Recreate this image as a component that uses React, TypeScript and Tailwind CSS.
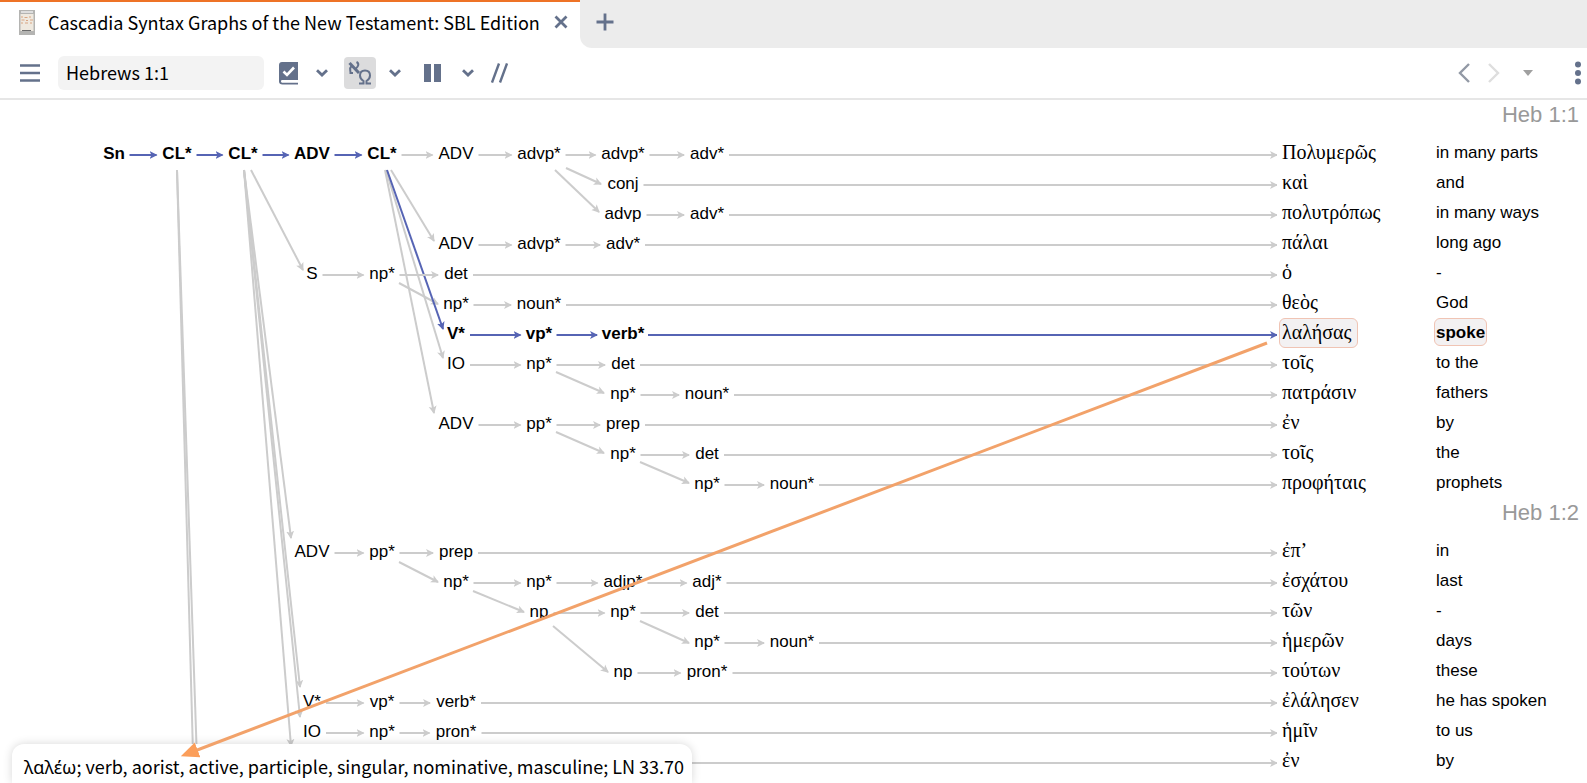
type Label = [col: number, text: string, strong?: boolean];

interface Row {
  nodes: Label[];
  greek: string;
  gloss: string;
  current?: boolean;
}

interface Verse {
  ref: string;
  rows: Row[];
}

const VERSES: Verse[] = [
  {
    ref: "Heb 1:1",
    rows: [
      {
        nodes: [
          [0, "Sn", true],
          [1, "CL*", true],
          [2, "CL*", true],
          [3, "ADV", true],
          [4, "CL*", true],
          [5, "ADV"],
          [6, "advp*"],
          [7, "advp*"],
          [8, "adv*"],
        ],
        greek: "Πολυμερῶς",
        gloss: "in many parts",
      },
      { nodes: [[7, "conj"]], greek: "καὶ", gloss: "and" },
      { nodes: [[7, "advp"], [8, "adv*"]], greek: "πολυτρόπως", gloss: "in many ways" },
      { nodes: [[5, "ADV"], [6, "advp*"], [7, "adv*"]], greek: "πάλαι", gloss: "long ago" },
      { nodes: [[3, "S"], [4, "np*"], [5, "det"]], greek: "ὁ", gloss: "-" },
      { nodes: [[5, "np*"], [6, "noun*"]], greek: "θεὸς", gloss: "God" },
      {
        nodes: [[5, "V*", true], [6, "vp*", true], [7, "verb*", true]],
        greek: "λαλήσας",
        gloss: "spoke",
        current: true,
      },
      { nodes: [[5, "IO"], [6, "np*"], [7, "det"]], greek: "τοῖς", gloss: "to the" },
      { nodes: [[7, "np*"], [8, "noun*"]], greek: "πατράσιν", gloss: "fathers" },
      { nodes: [[5, "ADV"], [6, "pp*"], [7, "prep"]], greek: "ἐν", gloss: "by" },
      { nodes: [[7, "np*"], [8, "det"]], greek: "τοῖς", gloss: "the" },
      { nodes: [[8, "np*"], [9, "noun*"]], greek: "προφήταις", gloss: "prophets" },
    ],
  },
  {
    ref: "Heb 1:2",
    rows: [
      { nodes: [[3, "ADV"], [4, "pp*"], [5, "prep"]], greek: "ἐπ’", gloss: "in" },
      { nodes: [[5, "np*"], [6, "np*"], [7, "adjp*"], [8, "adj*"]], greek: "ἐσχάτου", gloss: "last" },
      { nodes: [[6, "np"], [7, "np*"], [8, "det"]], greek: "τῶν", gloss: "-" },
      { nodes: [[8, "np*"], [9, "noun*"]], greek: "ἡμερῶν", gloss: "days" },
      { nodes: [[7, "np"], [8, "pron*"]], greek: "τούτων", gloss: "these" },
      { nodes: [[3, "V*"], [4, "vp*"], [5, "verb*"]], greek: "ἐλάλησεν", gloss: "he has spoken" },
      { nodes: [[3, "IO"], [4, "np*"], [5, "pron*"]], greek: "ἡμῖν", gloss: "to us" },
      { nodes: [], greek: "ἐν", gloss: "by" },
    ],
  },
];

/** Centre of each level of the tree, left to right. */
const COLS = [114, 177, 243, 312, 382, 456, 539, 623, 707, 792];

const LABEL_WIDTH: Record<string, number> = {
  Sn: 21,
  "CL*": 29,
  ADV: 35,
  "advp*": 43,
  advp: 37,
  "adv*": 34,
  conj: 31,
  S: 11,
  det: 24,
  "np*": 25,
  np: 19,
  "noun*": 44,
  "V*": 18,
  "vp*": 25,
  "verb*": 40,
  IO: 18,
  "pp*": 25,
  prep: 34,
  "adjp*": 39,
  "adj*": 29,
  "pron*": 41,
};

const HEADING_HEIGHT = 38;
const ROW_HEIGHT = 30;

/** Arrows that drop from a parent to a child on a lower row. */
const BRANCHES: [x1: number, y1: number, x2: number, y2: number][] = [
  [177, 70, 194, 690],
  [177, 70, 198, 690],
  [244, 70, 291, 646],
  [244, 70, 300, 617],
  [244, 70, 300, 587],
  [244, 70, 291, 438],
  [251, 70, 303, 170],
  [385, 70, 434, 313],
  [386, 70, 443, 258],
  [391, 70, 434, 141],
  [399, 183, 438, 204],
  [566, 68, 601, 84],
  [555, 70, 599, 112],
  [556, 272, 604, 293],
  [556, 332, 604, 353],
  [640, 362, 689, 383],
  [399, 462, 438, 482],
  [473, 491, 524, 512],
  [640, 521, 689, 543],
  [553, 526, 608, 572],
];

const ICON_BUTTON = "flex shrink-0 items-center justify-center text-[#64718b]";

function verseTop(index: number) {
  return VERSES.slice(0, index).reduce((top, verse) => top + HEADING_HEIGHT + verse.rows.length * ROW_HEIGHT, 0);
}

function Arrow({ x1, y1, x2, y2, strong }: { x1: number; y1: number; x2: number | string; y2: number; strong?: boolean }) {
  return (
    <line
      x1={x1}
      y1={y1}
      x2={x2}
      y2={y2}
      stroke={strong ? "#5664b4" : "#cccccc"}
      strokeWidth="2"
      markerEnd={strong ? "url(#head-strong)" : "url(#head)"}
    />
  );
}

function TreeRow({ row, y }: { row: Row; y: number }) {
  const last = row.nodes[row.nodes.length - 1];
  const leafStart = last ? COLS[last[0]] + LABEL_WIDTH[last[1]] / 2 + 5 : 560;

  return (
    <g>
      {row.nodes.map(([col, text, strong], i) => {
        const next = row.nodes[i + 1];
        return (
          <g key={col}>
            <text x={COLS[col]} y={y + 5} textAnchor="middle" className={strong ? "fill-black font-bold" : "fill-black"}>
              {text}
            </text>
            {next && (
              <Arrow
                x1={COLS[col] + LABEL_WIDTH[text] / 2 + 5}
                y1={y + 1}
                x2={COLS[next[0]] - LABEL_WIDTH[next[1]] / 2 - 6}
                y2={y + 1}
                strong={strong && next[2]}
              />
            )}
          </g>
        );
      })}
      <Arrow x1={leafStart} y1={y + 1} x2="100%" y2={y + 1} strong={row.current} />
    </g>
  );
}

function SyntaxTree() {
  return (
    <svg role="img" aria-label="Syntax tree" className="h-[684px] min-w-0 flex-1 text-[17px]">
      <defs>
        <marker id="head" markerUnits="userSpaceOnUse" markerWidth="9" markerHeight="9" refX="7" refY="4.5" orient="auto">
          <path d="M0 0.5L8 4.5L0 8.5L2 4.5Z" fill="#cccccc" />
        </marker>
        <marker id="head-strong" markerUnits="userSpaceOnUse" markerWidth="9" markerHeight="9" refX="7" refY="4.5" orient="auto">
          <path d="M0 0.5L8 4.5L0 8.5L2 4.5Z" fill="#5664b4" />
        </marker>
      </defs>
      {BRANCHES.map(([x1, y1, x2, y2]) => (
        <Arrow key={`${x1}-${x2}-${y2}`} x1={x1} y1={y1} x2={x2} y2={y2} />
      ))}
      <Arrow x1={387} y1={70} x2={443} y2={229} strong />
      {VERSES.map((verse, v) =>
        verse.rows.map((row, i) => (
          <TreeRow key={`${v}-${i}`} row={row} y={verseTop(v) + HEADING_HEIGHT + i * ROW_HEIGHT + 16} />
        )),
      )}
    </svg>
  );
}

function WordTable() {
  return (
    <table className="w-[310px] shrink-0 table-fixed border-collapse self-start text-left text-[17px] leading-[30px]">
      <colgroup>
        <col className="w-[159px]" />
        <col />
      </colgroup>
      {VERSES.map((verse) => (
        <tbody key={verse.ref}>
          <tr className="h-[38px]">
            <th colSpan={2} className="p-0 pr-2 text-right align-top text-[22px] leading-[30px] font-normal text-[#999999]">
              {verse.ref}
            </th>
          </tr>
          {verse.rows.map((row, i) => (
            <tr key={i} className="h-[30px]">
              <td lang="grc" className="p-0 pl-[5px] align-top font-['Liberation_Serif',serif] text-[20px]">
                {row.current ? (
                  <span className="-ml-[3px] block h-[30px] w-fit rounded-md border border-[#f0c4b4] bg-[#f3f1f2] pr-1.5 pl-[2px] leading-[26px]">
                    {row.greek}
                  </span>
                ) : (
                  <span className="block h-[30px] leading-[28px]">{row.greek}</span>
                )}
              </td>
              <td className="p-0 align-top">
                {row.current ? (
                  <span className="-ml-[2px] block h-[28px] w-fit rounded-md border border-[#f0c4b4] bg-[#f3f1f2] px-px leading-[28px] font-bold">
                    {row.gloss}
                  </span>
                ) : (
                  <span className="block h-[30px]">{row.gloss}</span>
                )}
              </td>
            </tr>
          ))}
        </tbody>
      ))}
    </table>
  );
}

function ChevronDown({ label }: { label: string }) {
  return (
    <button type="button" aria-label={label} className={`${ICON_BUTTON} h-8 w-3`}>
      <svg width="12" height="8" viewBox="0 0 12 8" fill="none" stroke="currentColor" strokeWidth="2.8">
        <path d="M1 1.2L6 6L11 1.2" />
      </svg>
    </button>
  );
}

function TabBar() {
  return (
    <div className="flex h-12 bg-white">
      <div className="flex h-full items-center border-t-2 border-[#ee7326] pr-3 pb-1.5 pl-[19px]">
        <svg width="16" height="25" viewBox="0 0 16 25" className="shrink-0">
          <rect width="16" height="25" fill="#b4b4b2" />
          <rect x="1.5" y="4" width="13" height="17" fill="#efe9df" />
          <path d="M2 7h2M5.5 7.5h3M10 7h2M2.500 10h3M7 10.500h2M11 10h3M2 13h2M6 13h3M11 13h2" stroke="#d8a583" strokeWidth="1" />
          <path d="M2 2h12" stroke="#dedede" strokeWidth="2" />
          <path d="M3 20.500h9" stroke="#6b6b6b" strokeWidth="1" />
        </svg>
        <span className="ml-[13px] text-[18px] leading-6 whitespace-nowrap">
          Cascadia Syntax Graphs of the New Testament: SBL Edition
        </span>
        <button type="button" aria-label="Close tab" className={`${ICON_BUTTON} ml-[14px]`}>
          <svg width="14" height="14" viewBox="0 0 14 14" stroke="currentColor" strokeWidth="2.800">
            <path d="M1.500 1.500L12.500 12.500M12.500 1.500L1.500 12.500" />
          </svg>
        </button>
      </div>
      <div className="flex h-full flex-1 items-center rounded-bl-xl bg-[#ececec] pb-1 pl-4">
        <button type="button" aria-label="New tab" className={ICON_BUTTON}>
          <svg width="18" height="18" viewBox="0 0 18 18" stroke="currentColor" strokeWidth="2.800">
            <path d="M9 0.500V17.500M0.500 9H17.500" />
          </svg>
        </button>
      </div>
    </div>
  );
}

function Toolbar() {
  return (
    <div className="flex h-[52px] items-center border-b-2 border-[#e6e6e6] bg-white pr-[5px] pl-5">
      <button type="button" aria-label="Panel menu" className={ICON_BUTTON}>
        <svg width="20" height="18" viewBox="0 0 20 18" stroke="currentColor" strokeWidth="2.400">
          <path d="M0 1.500H20M0 9H20M0 16.500H20" />
        </svg>
      </button>
      <input
        type="text"
        aria-label="Reference"
        defaultValue="Hebrews 1:1"
        className="ml-[18px] h-[34px] w-[206px] rounded-md bg-[#f3f3f3] px-2 pb-[3px] text-[18px] outline-none"
      />
      <button type="button" aria-label="Resource" className={`${ICON_BUTTON} ml-[15px]`}>
        <svg width="20" height="23" viewBox="0 0 20 23">
          <path
            fill="currentColor"
            fillRule="evenodd"
            d="M3 0H19V18H3.500C2.300 18 2 18.600 2 19.300C2 20.200 2.500 20.800 3.500 20.800H19V22.500H3.500C1.300 22.500 0 21.500 0 19.500V3C0 1.200 1.200 0 3 0Z"
          />
          <path d="M4.500 9.500L8 13L15 5.500" fill="none" stroke="#fff" strokeWidth="2.600" />
        </svg>
      </button>
      <div className="ml-[17px]">
        <ChevronDown label="Resource options" />
      </div>
      <button type="button" aria-label="Original languages" aria-pressed="true" className={`${ICON_BUTTON} ml-4 size-8 rounded-sm bg-[#dcdcdd]`}>
        <svg width="24" height="24" viewBox="0 0 24 24" fill="none" stroke="currentColor">
          <path d="M1.500 2L11 12" strokeWidth="3" />
          <path d="M8.500 1C11.500 2.500 10.500 5.500 7.500 8M3.500 5C1 7.500 2.500 8.500 2.500 12H5" strokeWidth="2" />
          <path d="M11 22.500H15.500V20C13 18.500 12 17 12 14.500C12 11.500 14 9.500 17 9.500C20 9.500 22 11.500 22 14.500C22 17 21 18.500 18.500 20V22.500H23" strokeWidth="2" />
        </svg>
      </button>
      <div className="ml-[13px]">
        <ChevronDown label="Language options" />
      </div>
      <button type="button" aria-label="Columns" className={`${ICON_BUTTON} ml-[23px]`}>
        <svg width="17" height="18" viewBox="0 0 17 18" fill="currentColor">
          <path d="M0 0H7V18H0ZM10 0H17V18H10Z" />
        </svg>
      </button>
      <div className="ml-[21px]">
        <ChevronDown label="Column options" />
      </div>
      <button type="button" aria-label="Parallel resources" className={`${ICON_BUTTON} ml-[17px]`}>
        <svg width="17" height="20" viewBox="0 0 17 20" stroke="currentColor" strokeWidth="2.400">
          <path d="M1 19.500L8 0.500M9 19.500L16 0.500" />
        </svg>
      </button>
      <div className="ml-auto flex items-center">
        <button type="button" aria-label="Back" className="text-[#9299a5]">
          <svg width="12" height="20" viewBox="0 0 12 20" fill="none" stroke="currentColor" strokeWidth="2.400">
            <path d="M11 1L2 10L11 19" />
          </svg>
        </button>
        <button type="button" aria-label="Forward" className="ml-[18px] text-[#dedede]">
          <svg width="12" height="20" viewBox="0 0 12 20" fill="none" stroke="currentColor" strokeWidth="2.400">
            <path d="M1 1L10 10L1 19" />
          </svg>
        </button>
        <button type="button" aria-label="History" className="ml-[23px] text-[#a0a0a0]">
          <svg width="10" height="6" viewBox="0 0 10 6" fill="currentColor">
            <path d="M0 0H10L5 6Z" />
          </svg>
        </button>
        <button type="button" aria-label="More" className={`${ICON_BUTTON} ml-[41px]`}>
          <svg width="8" height="24" viewBox="0 0 8 24" fill="currentColor">
            <circle cx="4" cy="3.500" r="3" />
            <circle cx="4" cy="12" r="3" />
            <circle cx="4" cy="20.500" r="3" />
          </svg>
        </button>
      </div>
    </div>
  );
}

export default function App() {
  return (
    <div className="relative flex h-screen flex-col overflow-hidden bg-white font-['Noto_Sans_CJK_SC','Noto_Sans',sans-serif] text-black">
      <TabBar />
      <Toolbar />

      <main className="relative flex min-h-0 flex-1 items-start overflow-hidden font-['Liberation_Sans',Arial,sans-serif]">
        <SyntaxTree />
        <WordTable />

        {/* Parsing of the word under the pointer */}
        <div
          role="status"
          className="absolute bottom-0 left-3 h-[39px] rounded-t-xl bg-white pt-2 pr-2 pl-3 font-['Noto_Sans_CJK_SC','Noto_Sans',sans-serif] text-[18px] leading-[28px] whitespace-nowrap shadow-[0_0_10px_rgb(0_0_0_/_0.16)]"
        >
          <span lang="grc" className="font-['Noto_Sans',sans-serif]">
            λαλέω
          </span>
          ; verb, aorist, active, participle, singular, nominative, masculine; LN 33.70
        </div>

        {/* Callout from the selected word to its parsing */}
        <svg aria-hidden="true" className="pointer-events-none absolute top-[243px] right-[320px] left-[181px] h-[413px] w-[calc(100%-501px)] overflow-visible">
          <defs>
            <marker id="callout" markerUnits="userSpaceOnUse" markerWidth="18" markerHeight="16" refX="6" refY="8" orient="auto">
              <path d="M0 0L18 8L0 16Z" fill="#fb9e5a" />
            </marker>
          </defs>
          <line x1="100%" y1="0" x2="11" y2="409" stroke="#f2a26a" strokeWidth="3" markerEnd="url(#callout)" />
        </svg>
      </main>
    </div>
  );
}
